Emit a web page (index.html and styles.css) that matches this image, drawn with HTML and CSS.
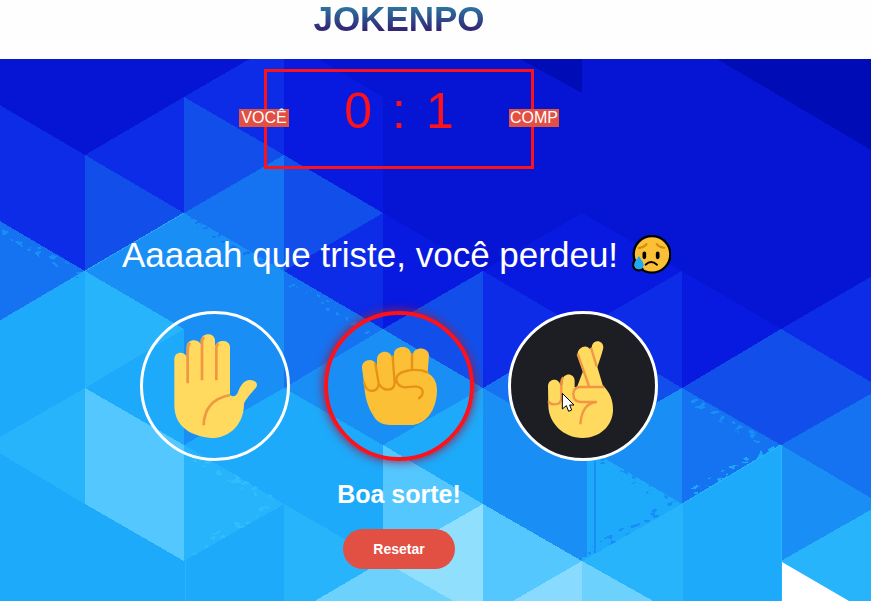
FILE: index.html
```
<!DOCTYPE html>
<html lang="pt-BR">
<head>
<meta charset="utf-8">
<title>Jokenpo</title>
<link rel="stylesheet" href="styles.css">
</head>
<body>
<header class="header"><h1 class="title">JOKENPO</h1></header>
<main class="game">
  <svg class="backdrop" viewBox="0 59 871 542" shape-rendering="crispEdges" aria-hidden="true">
    <defs>
      <filter id="specks" x="0" y="0" width="871" height="601" filterUnits="userSpaceOnUse">
        <feTurbulence type="fractalNoise" baseFrequency=".12 .2" numOctaves="2" seed="4"/>
        <feColorMatrix values="0 0 0 0 0  0 0 0 0 0  0 0 0 0 0  30 0 0 0 -18"/>
        <feComposite in="SourceGraphic" operator="in"/>
      </filter>
    </defs>
    <path fill="#0515d3" d="M0 59H871V601H0z"/>
    <path fill="#000db6" d="M520 59H582V93zM717 59H871V150z"/>
    <path fill="#0819e0" d="M284 39L383 97V213L284 155zM383 213L483 271L383 329zM483 271L582 213V329zM582 213L682 271L582 329zM682 271L781 329L682 388z"/>
    <path fill="#0c2ce8" d="M-14 97L85 155V271L-14 213zM85 155L184 97V213zM184 97L284 39V155zM284 271L383 213V329zM483 271L582 329L483 388zM582 329L682 271V388zM781 329L881 271V388z"/>
    <path fill="#124fea" d="M85 155L184 213L85 271zM184 97L284 155L184 213zM284 155L383 213L284 271zM383 329L483 271V388zM582 329L682 388L582 445zM682 388L781 329V445zM781 329L881 388L781 445z"/>
    <path fill="#1573f2" d="M-14 213L85 271L-14 329zM184 213L284 155V271zM284 271L383 329L284 388zM483 388L582 329V445zM682 388L781 445L682 504zM781 445L881 388V504z"/>
    <path fill="#198ff6" d="M85 271L184 213L284 271V388L184 445V329zM284 388L383 329L483 388L383 445zM483 388L582 445V561L483 504zM582 445L682 388V504zM781 445L881 504L781 561z"/>
    <path fill="#1daafa" d="M-14 329L85 271V388L-14 445zM85 388L184 329V445zM-14 445L85 504L184 561L284 504V620H-14zM184 445L284 388L383 445V561L284 504zM383 445L483 388V504zM582 445L682 504L582 561zM682 504L781 445V620H682z"/>
    <path fill="#28b4fb" d="M85 271L184 329L85 388zM-14 445L85 388V504zM184 445L284 504L184 561zM284 504L383 561V601H284zM582 561L682 504V620zM781 561L881 504V620H781z"/>
    <path fill="#54c7ff" d="M85 388L184 445V561L85 504zM383 445L483 504L383 561zM483 504L582 561V601H483z"/>
    <path fill="#6cd1fd" d="M313 602L383 561L455 602zM582 561L655 602H582z"/>
    <path fill="#90e0fd" d="M383 561L483 504V602H455z"/>
    <path fill="#89daff" d="M511 602L582 561V602z"/>
    <g filter="url(#specks)" fill="none" stroke-width="9">
      <path stroke="#198ff6" d="M0 229L80 275M290 283L370 331M686 397L774 448M590 456L670 501"/>
      <path stroke="#1573f2" d="M190 219L282 272"/>
      <path stroke="#198ff6" d="M588 553L676 501"/>
      <path stroke="#1daafa" d="M692 493L778 444"/>
      <path stroke="#30bdff" d="M186 452L276 503M190 552L276 504"/>
    </g>
    <g fill="none" stroke="#29a5fa">
      <path d="M85 271L184 213M0 321L85 271"/>
      <path stroke="#28b4fb" d="M682 504V601M781.500 445V561M682 504L781 445M187.500 448V558M192.500 451V555M185.500 561V601"/>
      <path stroke="#198ff6" stroke-width="2" d="M595 461V553"/>
      <path stroke="#198ff6" stroke-width="5" d="M584 461V557"/>
    </g>
    <path fill="#fff" shape-rendering="auto" d="M782 562L849 601H782z"/>
  </svg>
  <div class="content">
    <section class="scoreboard">
      <span class="tag tag-user">VOCÊ</span>
      <div class="score"><span>0</span><span>:</span><span>1</span></div>
      <span class="tag tag-comp">COMP</span>
    </section>
    <p class="result">Aaaaah que triste, você perdeu!
      <svg class="emoji" viewBox="36 30 120 120" aria-hidden="true">
        <circle cx="99" cy="88" r="55" fill="#fbc036" stroke="#000" stroke-width="7"/>
        <path d="M49 102Q42 113 43 122Q44 135 60 136Q67 135 73 130" fill="#fbc036" stroke="#000" stroke-width="7"/>
        <path d="M60 93C53 104 46 112 46 120C46 137 74 137 74 120C74 112 66 104 60 93z" fill="#1eaaf4"/>
        <path d="M59 69Q74 68 83 57M113 57Q122 68 136 68" fill="none" stroke="#d58c0b" stroke-width="6" stroke-linecap="round"/>
        <path d="M76 85V97M116 85V97" stroke="#000" stroke-width="11" stroke-linecap="round"/>
        <path d="M80 119Q96 103 114 119" fill="none" stroke="#000" stroke-width="6" stroke-linecap="round"/>
      </svg>
    </p>
    <section class="choices">
      <button class="choice" aria-label="Papel">
        <svg viewBox="24 27 432 432">
          <path fill="#ffda5e" d="M118 163C118 139 147 138 155 155V125C155 102 190 100 197 118V106C202 82 238 82 240 106V125C246 101 284 103 285 125V269C293 277 303 276 309 261C317 240 327 225 345 225C362 225 372 238 362 249C350 263 332 282 327 296C327 357 285 399 229 399C157 392 118 358 118 300z"/>
          <path fill="none" stroke="#f19743" stroke-width="8" d="M158 235V132Q158 121 165 113M201 226V111Q201 101 207 96M244 226V131Q244 120 250 115"/>
          <path fill="none" stroke="#f19743" stroke-width="8" d="M206 361Q208 285 285 270"/>
        </svg>
      </button>
      <button class="choice choice-lost" aria-label="Pedra">
        <svg viewBox="39 45 426 426">
          <path fill="#fbc036" d="M141 204C139 180 172 172 181 190L186 200V176C190 149 226 149 232 174L237 177V160C240 135 283 135 287 158L294 165C294 139 341 139 342 166L338 219C357 230 366 246 366 272C365 327 335 375 286 375H238C209 375 188 370 177 350C158 323 149 289 148 256z"/>
          <g fill="none" stroke="#e59216" stroke-width="7" stroke-linecap="round">
            <path d="M181 191L191 250Q191 272 169 273Q151 270 147 247M233 169L239 249Q238 268 219 269Q201 268 193 253M291 163V210M338 217Q309 205 273 213Q243 220 244 239Q246 259 269 262L303 259Q325 263 323 278Q322 289 312 295"/>
          </g>
        </svg>
      </button>
      <button class="choice choice-hover" aria-label="Tesoura">
        <svg viewBox="24 27 432 432">
          <path fill="#ffda5e" d="M135 244C135 219 169 218 172 241L178 239V227C180 202 214 202 215 227V247L222 246L240 199L224 154C219 131 249 114 261 133L266 128C268 101 301 104 301 127Q300 138 283 186L300 243C321 261 331 287 330 316C329 364 289 399 239 399C180 398 137 353 136 302z"/>
          <g fill="none" stroke="#f19743" stroke-width="7">
            <path d="M224 147L259 246M264 128L281 184M304 246H230Q211 248 211 268Q211 290 233 291H282M281 291Q237 294 232 358M136 289Q141 298 154 298Q175 298 175 278V232Q175 223 181 217"/>
          </g>
          <path fill="#fff" stroke="#000" stroke-width="3" d="M178 265V312L190 302L197 319L206 315L200 300H213z"/>
        </svg>
      </button>
    </section>
    <h2 class="luck">Boa sorte!</h2>
    <button class="reset">Resetar</button>
  </div>
</main>
</body>
</html>
```
FILE: styles.css
```
* { box-sizing: border-box; margin: 0; padding: 0; }
body {
  width: 871px;
  height: 601px;
  overflow: hidden;
  font-family: "Liberation Sans", Arial, sans-serif;
  background: #fefefe;
}
.header { display: flex; justify-content: center; width: 798px; height: 59px; }
.title {
  height: 37px;
  font-size: 35px;
  line-height: 37px;
  background: linear-gradient(#2b86aa 5%, #34136c 95%);
  -webkit-background-clip: text;
  background-clip: text;
  color: transparent;
}
.game { position: relative; height: 542px; overflow: hidden; }
.backdrop { position: absolute; inset: 0; width: 871px; height: 542px; }
.content {
  position: relative;
  display: flex;
  flex-direction: column;
  align-items: center;
  width: 798px;
  padding-top: 10px;
  color: #fff;
}
.scoreboard {
  position: relative;
  width: 270px;
  height: 100px;
  border: 3px solid #fd111b;
}
.score {
  display: flex;
  justify-content: center;
  gap: 20px;
  padding-top: 11px;
  font-size: 50px;
  line-height: 57px;
  color: #fd111b;
}
.tag {
  position: absolute;
  top: 37px;
  width: 50px;
  height: 18px;
  background: #e24f43;
  font-size: 16px;
  line-height: 18px;
  text-align: center;
}
.tag-user { left: -28px; }
.tag-comp { right: -28px; }
.result {
  display: flex;
  align-items: center;
  gap: 13px;
  height: 40px;
  margin: 66px 5px 0 0;
  font-size: 35px;
  line-height: 40px;
  white-space: nowrap;
}
.emoji { flex: none; width: 40px; height: 40px; }
.choices { display: flex; gap: 34px; margin-top: 36px; }
.choice {
  width: 150px;
  height: 150px;
  border: 3px solid #fff;
  border-radius: 50%;
  background: transparent;
}
.choice svg { display: block; width: 100%; height: 100%; }
.choice-lost {
  border: 4px solid #fd111b;
  box-shadow: 0 0 10px 1px rgba(150, 30, 70, .9);
}
.choice-hover { background: #1d1e23; }
.luck { margin-top: 19px; font-size: 25px; line-height: 28px; }
.reset {
  width: 112px;
  height: 40px;
  margin-top: 21px;
  border: 0;
  border-radius: 20px;
  background: #e24f43;
  color: #fff;
  font: bold 14px "Liberation Sans", Arial, sans-serif;
}
```
